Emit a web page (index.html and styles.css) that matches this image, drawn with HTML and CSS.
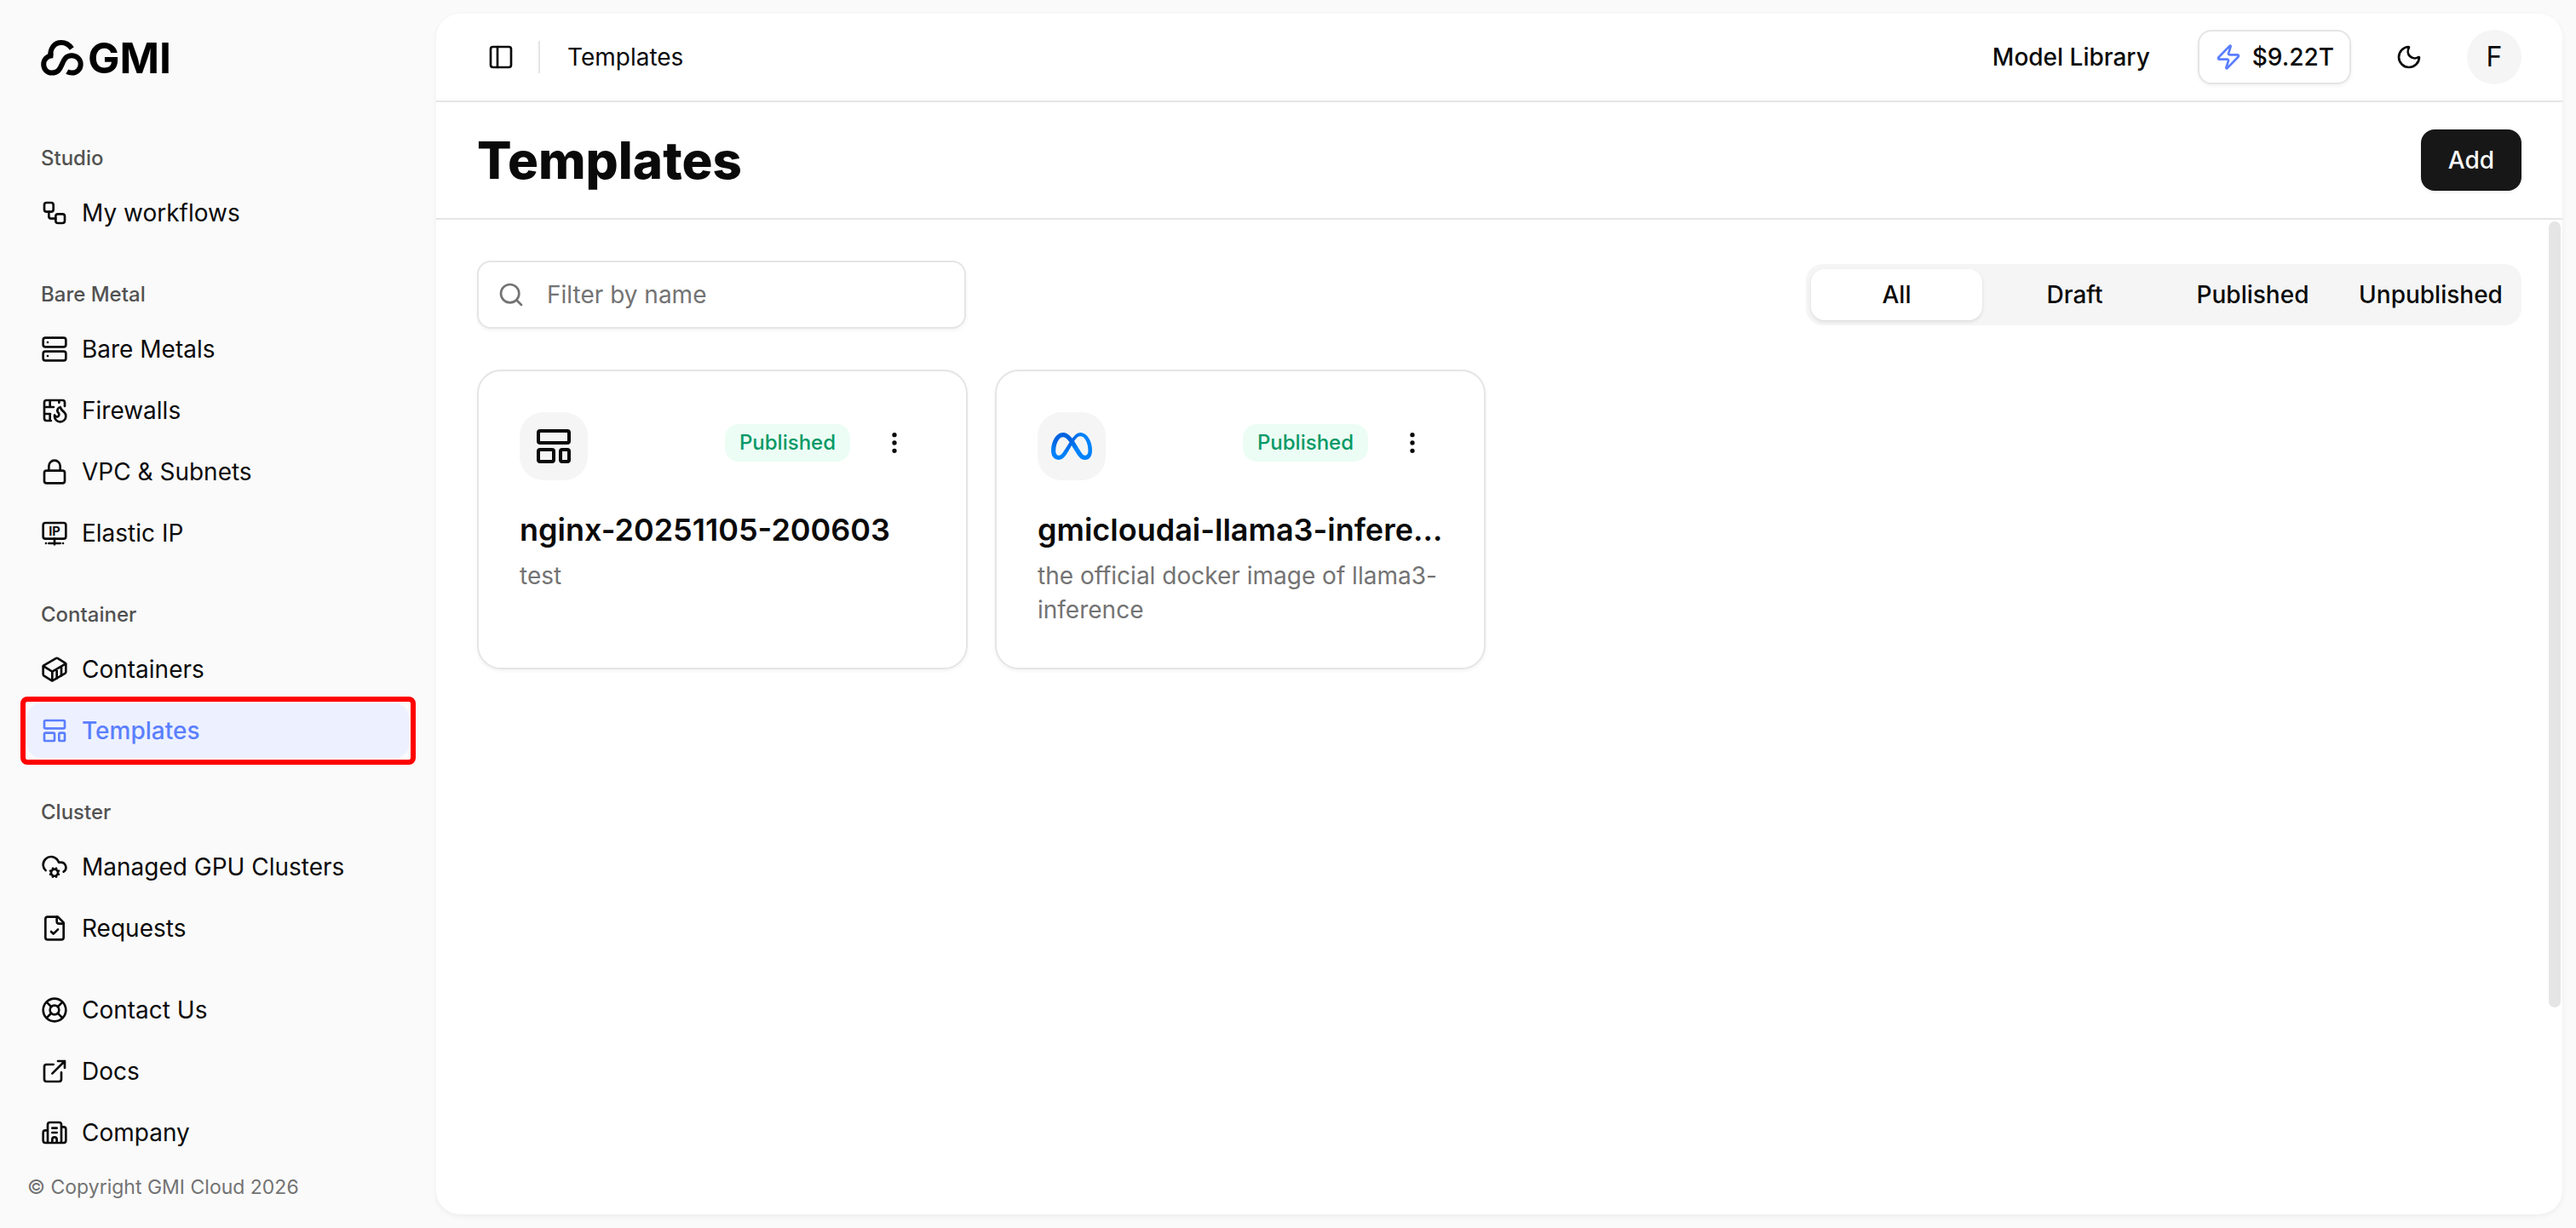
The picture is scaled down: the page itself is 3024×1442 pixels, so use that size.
FILE: index.html
```html
<!DOCTYPE html>
<html lang="en">
<head>
    <meta charset="UTF-8">
    <meta name="viewport" content="width=device-width, initial-scale=1.0">
    <title>Templates</title>
    <link rel="stylesheet" href="styles.css">
</head>
<body>
    <aside class="sidebar">
        <a class="logo" href="#">
            <svg class="logo-mark" viewBox="0 0 50 44" aria-hidden="true">
                <path d="M36.3 11C33 6.200 28.500 4 24 4C16 4 11 10.500 11.200 19.500"/>
                <path d="M14.500 19.200C7.500 18.800 3.200 24 3.200 29.500C3.200 35.500 7.500 39.600 13 39.600C19.500 39.600 22 36 24.800 29.500C27.500 23 30 19.300 36 19.300C42 19.300 46.700 23.500 46.700 29.500C46.700 35.500 42 39.600 36.500 39.600C34.500 39.600 32.500 39.200 30.800 38.200"/>
            </svg>
            <span>GMI</span>
        </a>

        <nav class="menu">
            <div class="group">
                <div class="group-label">Studio</div>
                <a class="item" href="#">
                    <svg class="icon" viewBox="0 0 24 24"><rect width="8" height="8" x="3" y="3" rx="2"/><path d="M7 11v4a2 2 0 0 0 2 2h4"/><rect width="8" height="8" x="13" y="13" rx="2"/></svg>
                    My workflows
                </a>
            </div>

            <div class="group">
                <div class="group-label">Bare Metal</div>
                <a class="item" href="#">
                    <svg class="icon" viewBox="0 0 24 24"><rect width="20" height="8" x="2" y="2" rx="2"/><rect width="20" height="8" x="2" y="14" rx="2"/><path d="M6 6h.01M6 18h.01"/></svg>
                    Bare Metals
                </a>
                <a class="item" href="#">
                    <svg class="icon" viewBox="0 0 24 24"><path d="M16 3v2.107M17 9c1 3 2.5 3.5 3.5 4.5A5 5 0 0 1 22 17a5 5 0 0 1-10 0c0-.3 0-.6.1-.9a2 2 0 1 0 3.3-2C13 11.5 16 9 17 9M21 8.274V5a2 2 0 0 0-2-2H5a2 2 0 0 0-2 2v14a2 2 0 0 0 2 2h3.938M3 15h5.253M3 9h8.228M8 15v6M8 3v6"/></svg>
                    Firewalls
                </a>
                <a class="item" href="#">
                    <svg class="icon" viewBox="0 0 24 24"><rect width="18" height="11" x="3" y="11" rx="2"/><path d="M7 11V7a5 5 0 0 1 10 0v4"/></svg>
                    VPC &amp; Subnets
                </a>
                <a class="item" href="#">
                    <svg class="icon" viewBox="0 0 24 24"><rect width="20" height="14" x="2" y="3" rx="2"/><path d="M12 17v5M7 21h10M4.500 21h.01M19.500 21h.01"/><text class="icon-text" x="12" y="14" text-anchor="middle">IP</text></svg>
                    Elastic IP
                </a>
            </div>

            <div class="group">
                <div class="group-label">Container</div>
                <a class="item" href="#">
                    <svg class="icon" viewBox="0 0 24 24"><path d="M22 7.700c0-.6-.4-1.200-.8-1.500l-6.300-3.900a1.720 1.720 0 0 0-1.700 0l-10.300 6c-.5.2-.9.8-.9 1.400v6.600c0 .5.4 1.200.8 1.500l6.300 3.900a1.720 1.720 0 0 0 1.700 0l10.300-6c.5-.3.9-1 .9-1.500Z"/><path d="M10 21.900V14L2.100 9.100M10 14l11.900-6.900M14 19.800v-8.100M18 17.500V9.400"/></svg>
                    Containers
                </a>
                <a class="item active" href="#" aria-current="page">
                    <svg class="icon" viewBox="0 0 24 24"><rect width="18" height="7" x="3" y="3" rx="1"/><rect width="9" height="7" x="3" y="14" rx="1"/><rect width="5" height="7" x="16" y="14" rx="1"/></svg>
                    Templates
                </a>
            </div>

            <div class="group">
                <div class="group-label">Cluster</div>
                <a class="item" href="#">
                    <svg class="icon" viewBox="0 0 24 24"><path d="m10.852 19.772-.383.924M13.148 14.228l.383-.923M13.148 19.772a3 3 0 1 0-2.296-5.544l-.383-.923M13.530 20.696l-.382-.924a3 3 0 1 1-2.296-5.544M14.772 15.852l.923-.383M14.772 18.148l.923.383M4.200 15.100a7 7 0 1 1 9.930-9.858A7 7 0 0 1 15.710 8h1.790a4.500 4.500 0 0 1 2.500 8.242M9.228 15.852l-.923-.383M9.228 18.148l-.923.383"/></svg>
                    Managed GPU Clusters
                </a>
                <a class="item" href="#">
                    <svg class="icon" viewBox="0 0 24 24"><path d="M15 2H6a2 2 0 0 0-2 2v16a2 2 0 0 0 2 2h12a2 2 0 0 0 2-2V7Z"/><path d="M14 2v4a2 2 0 0 0 2 2h4M9 15l2 2 4-4"/></svg>
                    Requests
                </a>
            </div>

            <div class="group">
                <a class="item" href="#">
                    <svg class="icon" viewBox="0 0 24 24"><circle cx="12" cy="12" r="10"/><path d="m4.930 4.930 4.240 4.240M14.830 9.170l4.240-4.240M14.830 14.830l4.240 4.240M9.170 14.830l-4.240 4.240"/><circle cx="12" cy="12" r="4"/></svg>
                    Contact Us
                </a>
                <a class="item" href="#">
                    <svg class="icon" viewBox="0 0 24 24"><path d="M15 3h6v6M10 14 21 3M18 13v6a2 2 0 0 1-2 2H5a2 2 0 0 1-2-2V8a2 2 0 0 1 2-2h6"/></svg>
                    Docs
                </a>
                <a class="item" href="#">
                    <svg class="icon" viewBox="0 0 24 24"><path d="M10 12h4M10 8h4M14 21v-3a2 2 0 0 0-4 0v3M6 10H4a2 2 0 0 0-2 2v7a2 2 0 0 0 2 2h16a2 2 0 0 0 2-2V9a2 2 0 0 0-2-2h-2M6 21V5a2 2 0 0 1 2-2h8a2 2 0 0 1 2 2v16"/></svg>
                    Company
                </a>
            </div>
        </nav>

        <div class="copyright">© Copyright GMI Cloud 2026</div>
    </aside>

    <main class="main">
        <header class="topbar">
            <button class="icon-button toggle" aria-label="Toggle sidebar">
                <svg class="icon" viewBox="0 0 24 24"><rect width="18" height="18" x="3" y="3" rx="2"/><path d="M9 3v18"/></svg>
            </button>
            <span class="divider"></span>
            <span class="crumb">Templates</span>
            <div class="topbar-right">
                <a class="library" href="#">Model Library</a>
                <button class="balance">
                    <svg class="icon bolt" viewBox="0 0 24 24"><path d="M4 14a1 1 0 0 1-.78-1.630l9.900-10.200a.5.5 0 0 1 .86.460l-1.920 6.020A1 1 0 0 0 13 10h7a1 1 0 0 1 .78 1.630l-9.900 10.200a.5.5 0 0 1-.86-.460l1.920-6.020A1 1 0 0 0 11 14z"/></svg>
                    $9.22T
                </button>
                <button class="icon-button" aria-label="Dark mode">
                    <svg class="icon" viewBox="0 0 24 24"><path d="M20.985 12.486a9 9 0 1 1-9.473-9.472c.405-.022.617.46.402.803a6 6 0 0 0 8.268 8.268c.344-.215.825-.004.803.401"/></svg>
                </button>
                <button class="avatar">F</button>
            </div>
        </header>

        <div class="title-row">
            <h1>Templates</h1>
            <button class="add-button">Add</button>
        </div>

        <section class="content">
            <div class="toolbar">
                <label class="search">
                    <svg class="icon" viewBox="0 0 24 24"><circle cx="11" cy="11" r="8"/><path d="m21 21-4.340-4.340"/></svg>
                    <input type="text" placeholder="Filter by name" aria-label="Filter by name">
                </label>
                <div class="tabs">
                    <button class="tab selected">All</button>
                    <button class="tab">Draft</button>
                    <button class="tab">Published</button>
                    <button class="tab">Unpublished</button>
                </div>
            </div>

            <div class="cards">
                <article class="card">
                    <div class="card-head">
                        <div class="card-icon">
                            <svg class="icon large" viewBox="0 0 24 24"><rect width="18" height="7" x="3" y="3" rx="1"/><rect width="9" height="7" x="3" y="14" rx="1"/><rect width="5" height="7" x="16" y="14" rx="1"/></svg>
                        </div>
                        <div class="card-actions">
                            <span class="badge">Published</span>
                            <button class="icon-button" aria-label="More">
                                <svg class="icon" viewBox="0 0 24 24"><circle cx="12" cy="12" r="1"/><circle cx="12" cy="5" r="1"/><circle cx="12" cy="19" r="1"/></svg>
                            </button>
                        </div>
                    </div>
                    <h2>nginx-20251105-200603</h2>
                    <p>test</p>
                </article>

                <article class="card">
                    <div class="card-head">
                        <div class="card-icon">
                            <svg class="meta" viewBox="0 0 24 24">
                                <defs>
                                    <radialGradient id="meta-blue" gradientUnits="userSpaceOnUse" cx="7" cy="6" r="13">
                                        <stop offset="0.4" stop-color="#0064e0"/>
                                        <stop offset="0.85" stop-color="#0082fb"/>
                                    </radialGradient>
                                </defs>
                                <path fill="url(#meta-blue)" d="M6.915 4.03c-1.968 0-3.683 1.28-4.871 3.113C.704 9.208 0 11.883 0 14.449c0 .706.07 1.369.21 1.973a6.624 6.624 0 0 0 .265.86 5.297 5.297 0 0 0 .371.761c.696 1.159 1.818 1.927 3.593 1.927 1.497 0 2.633-.671 3.965-2.444.76-1.012 1.144-1.626 2.663-4.32l.756-1.339.186-.325c.061.1.121.196.183.3l2.152 3.595c.724 1.21 1.665 2.556 2.47 3.314 1.046.987 1.992 1.22 3.06 1.22 1.075 0 1.876-.355 2.455-.843a3.743 3.743 0 0 0 .81-.973c.542-.939.861-2.127.861-3.745 0-2.72-.681-5.357-2.084-7.45-1.282-1.912-2.957-2.93-4.716-2.93-1.047 0-2.088.467-3.053 1.308-.652.57-1.257 1.29-1.82 2.05-.69-.875-1.335-1.547-1.958-2.056-1.182-.966-2.315-1.303-3.454-1.303zm10.16 2.053c1.147 0 2.188.758 2.992 1.999 1.132 1.748 1.647 4.195 1.647 6.4 0 1.548-.368 2.9-1.839 2.9-.58 0-1.027-.23-1.664-1.004-.496-.601-1.343-1.878-2.832-4.358l-.617-1.028a44.908 44.908 0 0 0-1.255-1.98c.07-.109.141-.224.211-.327 1.12-1.667 2.118-2.602 3.358-2.602zm-10.201.553c1.265 0 2.058.791 2.675 1.446.307.327.737.871 1.234 1.579l-1.02 1.566c-.757 1.163-1.882 3.017-2.837 4.338-1.191 1.649-1.81 1.817-2.486 1.817-.524 0-1.038-.237-1.383-.794-.263-.426-.464-1.13-.464-2.046 0-2.221.63-4.535 1.66-6.088.454-.687.964-1.226 1.533-1.533a2.264 2.264 0 0 1 1.088-.285z"/>
                            </svg>
                        </div>
                        <div class="card-actions">
                            <span class="badge">Published</span>
                            <button class="icon-button" aria-label="More">
                                <svg class="icon" viewBox="0 0 24 24"><circle cx="12" cy="12" r="1"/><circle cx="12" cy="5" r="1"/><circle cx="12" cy="19" r="1"/></svg>
                            </button>
                        </div>
                    </div>
                    <h2>gmicloudai-llama3-infere…</h2>
                    <p>the official docker image of llama3-inference</p>
                </article>
            </div>

            <div class="scroll-thumb"></div>
        </section>
    </main>
</body>
</html>
```

FILE: styles.css
```css
* {
    box-sizing: border-box;
}
body {
    margin: 0;
    min-height: 100vh;
    display: flex;
    background-color: #fafafa;
    color: #0a0a0a;
    font-family: Inter, "Liberation Sans", sans-serif;
    font-size: 28px;
    line-height: 40px;
}
a {
    color: inherit;
    text-decoration: none;
}
button {
    padding: 0;
    border: none;
    background: none;
    color: inherit;
    font: inherit;
    cursor: pointer;
}
.icon {
    width: 32px;
    height: 32px;
    flex-shrink: 0;
    fill: none;
    stroke: currentColor;
    stroke-width: 2;
    stroke-linecap: round;
    stroke-linejoin: round;
}
.icon.large {
    width: 48px;
    height: 48px;
}
.icon-text {
    fill: currentColor;
    stroke: none;
    font-size: 11px;
    font-weight: 700;
}
.icon-button {
    width: 72px;
    height: 72px;
    display: flex;
    align-items: center;
    justify-content: center;
}

/* Sidebar */
.sidebar {
    width: 512px;
    flex-shrink: 0;
    padding: 36px 32px 0;
}
.logo {
    display: flex;
    align-items: center;
    gap: 5px;
    height: 64px;
    padding-left: 16px;
    color: #000;
    font-size: 50px;
    font-weight: 700;
}
.logo-mark {
    width: 50px;
    height: 44px;
    fill: none;
    stroke: #000;
    stroke-width: 6;
}
.menu {
    display: flex;
    flex-direction: column;
    gap: 32px;
    padding-top: 54px;
}
.group {
    display: flex;
    flex-direction: column;
    gap: 8px;
}
.group-label {
    height: 64px;
    margin-bottom: -8px;
    padding-left: 16px;
    color: #525252;
    font-size: 24px;
    font-weight: 500;
    line-height: 64px;
}
.item {
    display: flex;
    align-items: center;
    gap: 16px;
    height: 64px;
    padding: 0 16px;
    border-radius: 16px;
}
.item.active {
    position: relative;
    background-color: #edf1ff;
    color: #5b7fff;
    font-weight: 500;
}
/* red frame around the current page */
.item.active::after {
    content: "";
    position: absolute;
    inset: -8px;
    border: 6px solid #ff0000;
    border-radius: 8px;
}
.copyright {
    padding-top: 12px;
    color: #737373;
    font-size: 23px;
}

/* Main panel */
.main {
    flex: 1;
    min-width: 0;
    display: flex;
    flex-direction: column;
    margin: 16px 16px 16px 0;
    border-radius: 28px;
    background-color: #fff;
    box-shadow: 0 2px 6px rgba(0, 0, 0, 0.06);
}
.topbar {
    display: flex;
    align-items: center;
    height: 104px;
    padding: 0 48px 0 40px;
    border-bottom: 2px solid #e5e5e5;
}
.divider {
    width: 2px;
    height: 38px;
    margin: 0 32px 0 8px;
    background-color: #e5e5e5;
}
.topbar-right {
    display: flex;
    align-items: center;
    gap: 32px;
    margin-left: auto;
}
.library {
    padding: 0 24px;
    font-weight: 500;
}
.balance {
    display: flex;
    align-items: center;
    gap: 12px;
    height: 64px;
    padding: 0 18px;
    border: 2px solid #e5e5e5;
    border-radius: 16px;
    box-shadow: 0 2px 4px rgba(0, 0, 0, 0.05);
    font-weight: 500;
}
.bolt {
    color: #5b7fff;
}
.avatar {
    width: 64px;
    height: 64px;
    border-radius: 50%;
    background-color: #f5f5f5;
    font-size: 32px;
}
.title-row {
    display: flex;
    align-items: center;
    justify-content: space-between;
    padding: 32px 48px;
    border-bottom: 2px solid #e5e5e5;
}
h1 {
    margin: 0;
    font-size: 60px;
    font-weight: 800;
    line-height: 72px;
}
.add-button {
    height: 72px;
    padding: 0 32px;
    border-radius: 16px;
    background-color: #171717;
    box-shadow: 0 2px 4px rgba(0, 0, 0, 0.05);
    color: #fafafa;
    font-weight: 500;
}
.content {
    position: relative;
    flex: 1;
    padding: 48px;
}
.toolbar {
    display: flex;
    align-items: center;
    justify-content: space-between;
    margin-bottom: 48px;
}
.search {
    display: flex;
    align-items: center;
    gap: 26px;
    width: 574px;
    height: 80px;
    padding: 0 22px;
    border: 2px solid #e5e5e5;
    border-radius: 16px;
    box-shadow: 0 2px 4px rgba(0, 0, 0, 0.05);
    color: #737373;
}
.search input {
    flex: 1;
    min-width: 0;
    padding: 0;
    border: none;
    outline: none;
    background: none;
    color: #0a0a0a;
    font: inherit;
}
.search input::placeholder {
    color: #737373;
}
.tabs {
    display: grid;
    grid-template-columns: repeat(4, 1fr);
    gap: 8px;
    width: 840px;
    padding: 6px;
    border-radius: 20px;
    background-color: #f5f5f5;
}
.tab {
    height: 60px;
    border-radius: 16px;
    font-weight: 500;
}
.tab.selected {
    background-color: #fff;
    box-shadow: 0 2px 4px rgba(0, 0, 0, 0.1);
}
.cards {
    display: grid;
    grid-template-columns: repeat(4, 1fr);
    gap: 32px;
}
.card {
    min-width: 0;
    min-height: 352px;
    padding: 48px;
    border: 2px solid #e5e5e5;
    border-radius: 28px;
    box-shadow: 0 2px 4px rgba(0, 0, 0, 0.05);
}
.card-head {
    display: flex;
    align-items: flex-start;
    justify-content: space-between;
    margin-bottom: 36px;
}
.card-icon {
    width: 80px;
    height: 80px;
    display: flex;
    align-items: center;
    justify-content: center;
    border-radius: 28px;
    background-color: #f5f5f5;
}
.meta {
    width: 48px;
    height: 48px;
}
.card-actions {
    display: flex;
    align-items: center;
    gap: 16px;
}
.badge {
    padding: 2px 17px;
    border-radius: 16px;
    background-color: #ecfdf5;
    color: #009966;
    font-size: 24px;
    font-weight: 500;
}
h2 {
    margin: 0 0 12px;
    font-size: 36px;
    font-weight: 600;
    line-height: 44px;
    white-space: nowrap;
}
.card p {
    margin: 0;
    color: #737373;
}
.scroll-thumb {
    position: absolute;
    top: 2px;
    right: 2px;
    width: 14px;
    height: 79%;
    border-radius: 7px;
    background-color: #e5e5e5;
}
```
